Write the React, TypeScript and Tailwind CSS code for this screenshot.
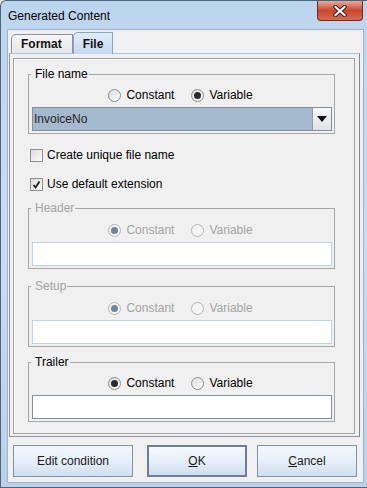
import clsx from "clsx";
import type { ReactNode } from "react";

function Radio({ label, checked, disabled }: { label: string; checked?: boolean; disabled?: boolean }) {
  return (
    <span className="flex items-center gap-[5px]">
      <span
        className={clsx(
          "flex size-[13px] items-center justify-center rounded-full border bg-linear-to-br",
          disabled ? "border-[#b4b4b4] from-[#f2f2f2] to-[#f8f8f8]" : "border-[#8a8a8a] from-[#dedede] to-[#fcfcfc]"
        )}
      >
        {checked && (
          <span className={clsx("size-[7px] rounded-full", disabled ? "bg-[#70849a]" : "bg-[#2b2b2b]")} />
        )}
      </span>
      <span className={disabled ? "text-[#a3a3a3]" : "text-black"}>{label}</span>
    </span>
  );
}

function RadioRow({ constant, disabled }: { constant?: boolean; disabled?: boolean }) {
  return (
    <div className="flex h-[16px] items-center justify-center gap-[17px] pr-[3px]">
      <Radio label="Constant" checked={constant} disabled={disabled} />
      <Radio label="Variable" checked={!constant} disabled={disabled} />
    </div>
  );
}

function Group({ title, disabled, className, children }: { title: string; disabled?: boolean; className?: string; children: ReactNode }) {
  return (
    <div className={clsx("relative ml-[14px] w-[307px] border border-[#a6a6a6] pr-[2px] pb-[2px] pl-[3px]", className)}>
      <span
        className={clsx(
          "absolute top-[-8px] left-[2px] bg-[#f0f0f0] pr-[1px] pl-[4px] leading-[14px]",
          disabled ? "text-[#a3a3a3]" : "text-black"
        )}
      >
        {title}
      </span>
      {children}
    </div>
  );
}

function Field({ disabled }: { disabled?: boolean }) {
  return <div className={clsx("mt-[4px] h-[24px] border bg-white", disabled ? "border-[#bcd3ea]" : "border-[#828e9b]")} />;
}

function Check({ label, checked }: { label: string; checked?: boolean }) {
  return (
    <div className="ml-[16px] flex h-[20px] items-center gap-[4px]">
      <span className="flex size-[13px] items-center justify-center border border-[#8e8f8f] bg-linear-to-br from-[#dcdcdc] to-[#fbfbfb]">
        {checked && (
          <svg width="9" height="9" viewBox="0 0 9 9">
            <path d="M1.5 5 L3.5 7.5 L7.5 1.5" fill="none" stroke="#1f1f1f" strokeWidth="1.8" />
          </svg>
        )}
      </span>
      <span className="text-black">{label}</span>
    </div>
  );
}

function Btn({ children, className, def }: { children: ReactNode; className?: string; def?: boolean }) {
  return (
    <div
      className={clsx(
        "flex h-[32px] items-center justify-center bg-linear-to-b from-[#f4f8fc] via-[#e6eff8] to-[#cddff1] text-[#1a1a1a]",
        def ? "border-2 border-[#6a7f95]" : "border border-[#7d93a9]",
        className
      )}
    >
      {children}
    </div>
  );
}

export default function App() {
  return (
    <div className="flex h-[488px] w-[367px] flex-col overflow-hidden rounded-tl-[6px] border-t border-l border-b border-[#4f6478] bg-linear-to-b from-[#bcd5ee] via-[#c9ddf2] to-[#b9d0e8] font-['Liberation_Sans',Arial,sans-serif] text-[12px]">
      <div className="flex h-[28px] shrink-0 items-start justify-between">
        <span className="pt-[7px] pl-[7px] leading-[16px] text-black">Generated Content</span>
        <div className="mr-[4px] flex h-[20px] w-[46px] items-center justify-center rounded-b-[4px] border border-t-0 border-[#6b2b22] bg-linear-to-b from-[#e9a899] via-[#c9452f] to-[#d86a4f]">
          <svg width="14" height="12" viewBox="0 0 14 12">
            <path d="M2.5 2 L11.5 10 M11.5 2 L2.5 10" stroke="#3c1a14" strokeWidth="4" strokeLinecap="square" />
            <path d="M2.5 2 L11.5 10 M11.5 2 L2.5 10" stroke="#ffffff" strokeWidth="2.2" strokeLinecap="square" />
          </svg>
        </div>
      </div>

      <div className="ml-[6px] mr-[3px] flex h-[454px] flex-col border border-[#9fb3c8] bg-[#f0f0f0]">
        <div className="flex h-[23px] items-end pl-[3px]">
          <div className="flex h-[19px] items-center rounded-tl-[5px] border border-b-0 border-[#8b929c] bg-linear-to-b from-[#f5f5f5] to-[#e6e6e6] pr-[10px] pl-[9px] font-bold text-[#111]">
            Format
          </div>
          <div className="relative top-[1px] flex h-[22px] items-center rounded-tl-[5px] border border-b-0 border-[#8da4bd] bg-linear-to-b from-[#dfecf9] to-[#c3d9f0] pr-[9px] pl-[9px] font-bold text-[#111]">
            File
          </div>
        </div>

        <div className="ml-[1px] mr-[3px] h-[384px] border border-t-[#a9c2dc] border-r-[#7e8690] border-b-[#8e959e] border-l-[#8e959e] pt-[4px] pr-[4px] pl-[3px]">
          <div className="h-[376px] border border-[#a2a2a2] shadow-[inset_1px_1px_0_#ffffff]">
            <Group title="File name" className="mt-[15px] pt-[12px]">
              <RadioRow />
              <div className="mt-[4px] flex h-[24px] border border-[#7f90a3] bg-[#a4b9cd]">
                <span className="flex-1 pl-[1px] leading-[22px] text-[#262626]">InvoiceNo</span>
                <span className="flex w-[19px] items-center justify-center border-l border-[#8d9cac] bg-linear-to-b from-[#f8f8f8] to-[#e2e2e2]">
                  <svg width="10" height="6" viewBox="0 0 10 6">
                    <path d="M0 0 H10 L5 6 Z" fill="#111" />
                  </svg>
                </span>
              </div>
            </Group>

            <div className="mt-[11px]">
              <Check label="Create unique file name" />
            </div>
            <div className="mt-[9px]">
              <Check label="Use default extension" checked />
            </div>

            <Group title="Header" disabled className="mt-[14px] pt-[13px]">
              <RadioRow constant disabled />
              <Field disabled />
            </Group>

            <Group title="Setup" disabled className="mt-[17px] pt-[13px]">
              <RadioRow constant disabled />
              <Field disabled />
            </Group>

            <Group title="Trailer" className="mt-[15px] pt-[12px]">
              <RadioRow constant />
              <Field />
            </Group>
          </div>
        </div>

        <div className="mt-[8px] flex pl-[5px]">
          <Btn className="w-[120px]">Edit condition</Btn>
          <Btn def className="ml-[14px] w-[100px]">
            <span>
              <span className="underline">O</span>K
            </span>
          </Btn>
          <Btn className="ml-[10px] w-[100px]">
            <span>
              <span className="underline">C</span>ancel
            </span>
          </Btn>
        </div>
      </div>
    </div>
  );
}
